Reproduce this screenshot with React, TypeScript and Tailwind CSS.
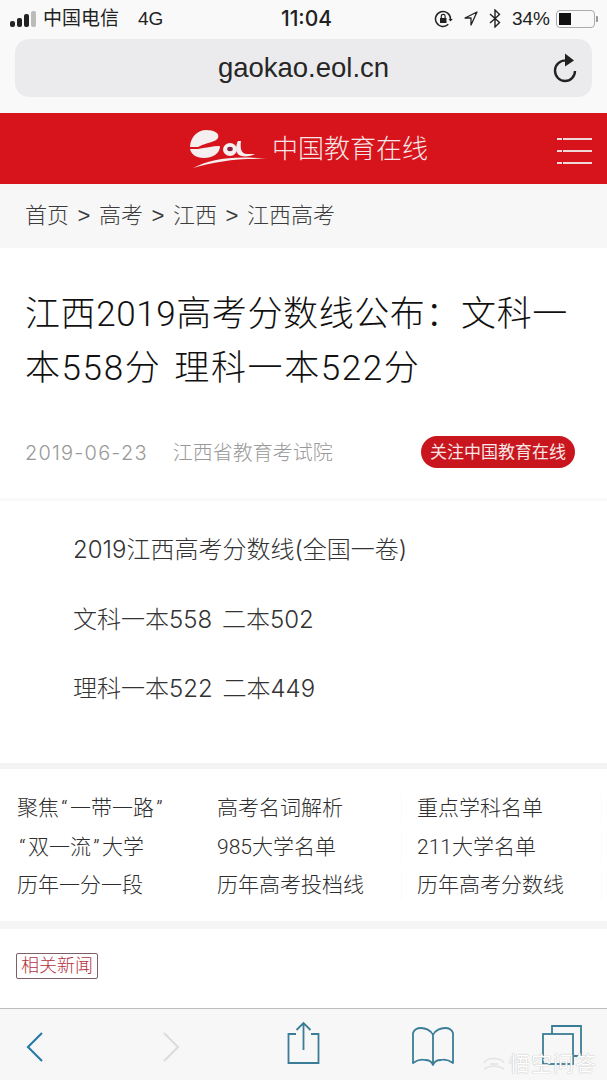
const LINKS = [
  ['聚焦“一带一路”', '高考名词解析', '重点学科名单'],
  ['“双一流”大学', '985大学名单', '211大学名单'],
  ['历年一分一段', '历年高考投档线', '历年高考分数线'],
];

const CRUMBS = ['首页', '高考', '江西', '江西高考'];

// the source font sets curly quotes wider than Liberation does
const LinkText = ({ text }: { text: string }) => (
  <>
    {text.split(/([“”])/).map((part, i) =>
      part === '“' || part === '”' ? (
        <span key={i} className="inline-block w-[11px] text-center">
          {part}
        </span>
      ) : (
        part
      ),
    )}
  </>
);

const StatusIcons = () => (
  <div className="flex items-center">
    {/* rotation lock */}
    <svg width="19" height="18" viewBox="0 0 19 18" fill="none" stroke="#222" strokeWidth="1.5">
      <path d="M16.500 9a7.500 7.500 0 1 0-2.200 5.300" />
      <path d="M14.500 9 16.500 11.500 18.800 9Z" fill="#222" stroke="none" />
      <rect x="6" y="8" width="6.500" height="5" fill="#222" stroke="none" />
      <path d="M7.300 8V6.300a1.900 1.900 0 0 1 3.800 0V8" strokeWidth="1.200" />
    </svg>
    {/* location */}
    <svg className="ml-[11px]" width="14" height="15" viewBox="0 0 14 15" fill="none" stroke="#222" strokeWidth="1.3" strokeLinejoin="round">
      <path d="M13 1 1 7h6v7z" />
    </svg>
    {/* bluetooth */}
    <svg className="ml-[11px]" width="12" height="19" viewBox="0 0 12 19" fill="none" stroke="#222" strokeWidth="1.4">
      <path d="M1 5l9.500 8.500-4.500 4.500V1l4.500 4.500L1 14" />
    </svg>
  </div>
);

const Logo = () => (
  <svg width="78" height="38" viewBox="0 0 78 38" fill="#f5efef">
    <path d="M0 17C0 7 8 0 16 0c8 0 14 3 12 8-2 4-10 4-20 9Z" />
    <path d="M0 19h8c7-1 14-3 22-3 0 8-8 12-16 12C6 28 1 24 0 19Z" />
    <ellipse cx="40" cy="19.500" rx="7" ry="6.500" />
    <ellipse cx="40" cy="19" rx="2.800" ry="2.200" fill="#8a2040" />
    <path d="M51 11c-1 7 0 13 6 13h8c-5 3-13 3-16 1-4-3-3-11-1-14Z" />
    <path d="M3 38C20 29 45 25 77 29 48 28 25 32 3 38Z" />
  </svg>
);

const Toolbar = () => (
  <div className="h-[72px] bg-[#f7f7f8] border-t border-[#bdbdbd] relative shrink-0">
    <svg className="absolute left-[25px] top-[22px]" width="20" height="32" viewBox="0 0 20 32" fill="none" stroke="#2a7ba6" strokeWidth="2.200">
      <path d="M17 2 3 16l14 14" />
    </svg>
    <svg className="absolute left-[161px] top-[22px]" width="20" height="32" viewBox="0 0 20 32" fill="none" stroke="#dcdcdc" strokeWidth="2.200">
      <path d="M3 2l14 14L3 30" />
    </svg>
    <svg className="absolute left-[285px] top-[12px]" width="36" height="44" viewBox="0 0 36 44" fill="none" stroke="#3b7d96" strokeWidth="1.800">
      <path d="M11 13H3.500v29h30V13H26" />
      <path d="M18.500 29V3M11.500 9l7-7 7 7" />
    </svg>
    <svg className="absolute left-[410px] top-[16px]" width="46" height="42" viewBox="0 0 46 42" fill="none" stroke="#3b7d96" strokeWidth="1.800" strokeLinejoin="round">
      <path d="M23 10C21 5 15 3 11 3 7 3 4 5 3 8v30c4-3 8-4 12-3 4 0 7 2 8 5 1-3 4-5 8-5 4-1 8 0 12 3V8c-1-3-4-5-8-5-4 0-10 2-12 7Zm0 0v30" />
    </svg>
    <svg className="absolute left-[540px] top-[16px]" width="44" height="44" viewBox="0 0 44 44" fill="none" stroke="#3b7d96" strokeWidth="1.800">
      <path d="M12 9V1h29v30h-7" />
      <rect x="3" y="9" width="30" height="30" />
    </svg>
    <span className="absolute right-[10px] top-[44px] flex items-center gap-1 text-[21px] leading-none tracking-[1px] text-white [text-shadow:0_0_1px_#999]">
      <svg width="22" height="14" viewBox="0 0 22 14" fill="none" stroke="#e4e4e4" strokeWidth="1.600">
        <path d="M1 6c3-6 17-6 20 0M1 12c6-4 14-4 20 0M7 7h8" />
      </svg>
      悟空问答
    </span>
  </div>
);

export default function App() {
  return (
    <div className="w-[607px] h-[1080px] overflow-hidden bg-white flex flex-col text-[#333] font-['Liberation_Sans','Noto_Sans_CJK_SC',sans-serif]">
      <div className="h-[113px] bg-[#f9f9f9] flex flex-col shrink-0">
        <div className="h-[37px] pl-[10px] pr-[12px] flex items-center justify-between text-[#222]">
          <div className="flex items-center w-[203px]">
            <div className="flex items-end gap-[2px] h-[16px]">
              <i className="w-[5px] h-[6px] rounded-[2px] bg-[#222]" />
              <i className="w-[5px] h-[9px] rounded-[2px] bg-[#222]" />
              <i className="w-[5px] h-[13px] rounded-[2px] bg-[#222]" />
              <i className="w-[5px] h-[16px] rounded-[2px] bg-[#bbb]" />
            </div>
            <span className="ml-[7px] text-[19px] leading-none">中国电信</span>
            <span className="ml-[19px] text-[19px] leading-none">4G</span>
          </div>
          <span className="text-[21px] font-medium font-['Inter'] leading-none">11:04</span>
          <div className="flex items-center w-[195px] justify-end">
            <StatusIcons />
            <span className="ml-[11px] text-[19px] leading-none">34%</span>
            <div className="ml-[6px] w-[39px] h-[18px] rounded-[4px] border border-[#aaa] p-[2px] relative">
              <div className="w-[12px] h-full bg-[#111]" />
              <i className="absolute -right-[4px] top-[5px] w-[2px] h-[6px] bg-[#999] rounded-r-[1px]" />
            </div>
          </div>
        </div>
        <div className="mx-[15px] mt-[2px] h-[58px] rounded-[14px] bg-[#ebebed] relative flex items-center justify-center">
          <span className="text-[27.500px] leading-none text-[#262626]">gaokao.eol.cn</span>
          <svg className="absolute right-[14px] top-[13px]" width="26" height="32" viewBox="0 0 26 32" fill="none" stroke="#222" strokeWidth="2.400">
            <path d="M15 8.400C8 8 3 12.500 3 18.500 3 24.500 7.500 29 13 29s10-4.500 10-10" />
            <path d="M13 1.500 22 8.500 13 14.500Z" fill="#222" stroke="none" />
          </svg>
        </div>
      </div>

      <div className="h-[71px] bg-[#d7141c] shrink-0 relative flex items-center pl-[190px]">
        <Logo />
        <span className="ml-[4px] mt-[1px] text-[26px] leading-none text-[#f4e6e6] font-light">中国教育在线</span>
        <div className="absolute right-[15px] top-[25px] flex flex-col gap-[10px]">
          {[0, 1, 2].map((i) => (
            <div key={i} className="flex items-center gap-[1px]">
              <i className="w-[5px] h-[2px] bg-[#f0d8d8]" />
              <i className="w-[29px] h-[2px] bg-[#f0d8d8]" />
            </div>
          ))}
        </div>
      </div>

      <div className="h-[64px] bg-[#f7f7f7] shrink-0 px-[25px] flex items-center gap-[8px] text-[22px] text-[#3c3c3c] leading-none font-light">
        {CRUMBS.map((c, i) => (
          <div key={c} className="flex items-center gap-[8px]">
            {i > 0 && <span className="w-[14px] text-center">&gt;</span>}
            <span>{c}</span>
          </div>
        ))}
      </div>

      <div className="h-[253px] shrink-0 px-[25px] pt-[40px] border-b-[3px] border-[#fafafa]">
        <h1 className="text-[35px] leading-[54px] font-light text-[#111] font-['Roboto','Noto_Sans_CJK_SC',sans-serif]">
          <span className="block tracking-[0.6px] whitespace-nowrap">江西2019高考分数线公布：文科一</span>
          <span className="block tracking-[1.6px] whitespace-nowrap [word-spacing:3px]">本558分 理科一本522分</span>
        </h1>
        <div className="mt-[40px] flex items-center justify-between text-[20px] leading-none text-[#999]">
          <div className="flex items-center gap-[25px] font-light mt-[2px]">
            <span className="font-['Inter'] tracking-[1.2px]">2019-06-23</span>
            <span>江西省教育考试院</span>
          </div>
          <span className="h-[32px] px-[9px] mr-[7px] rounded-full bg-[#c9161e] text-[#f6e6e6] text-[17px] flex items-center">
            关注中国教育在线
          </span>
        </div>
      </div>

      <div className="h-[262px] shrink-0 pl-[73px] pt-[32px] flex flex-col gap-[35.500px] text-[24px] leading-[34px] text-[#333] font-light font-['Inter','Noto_Sans_CJK_SC',sans-serif] [word-spacing:3px]">
        <p>2019江西高考分数线(全国一卷)</p>
        <p>文科一本558 二本502</p>
        <p>理科一本522 二本449</p>
      </div>

      <div className="h-[6px] bg-[#f3f3f3] shrink-0" />

      <div className="h-[152px] shrink-0 pl-[17px] pt-[24px] flex flex-col gap-[8.500px] text-[21px] leading-[30px] text-[#2e2e2e] font-light font-['Roboto','Noto_Sans_CJK_SC',sans-serif]">
        {LINKS.map((row) => (
          <div key={row[0]} className="grid grid-cols-[200px_200px_200px]">
            {row.map((t, i) => (
              <span key={t} className={i > 0 ? 'w-[185px] border-r border-[#fafafa]' : ''}>
                <LinkText text={t} />
              </span>
            ))}
          </div>
        ))}
      </div>

      <div className="h-[8px] bg-[#f5f5f5] shrink-0" />

      <div className="flex-1 px-[16px] pt-[24px] bg-white">
        <span className="block w-fit border border-[#7d5f66] rounded-[2px] px-[4px] text-[18px] leading-[24px] text-[#b2323f] font-light">
          相关新闻
        </span>
      </div>

      <Toolbar />
    </div>
  );
}
